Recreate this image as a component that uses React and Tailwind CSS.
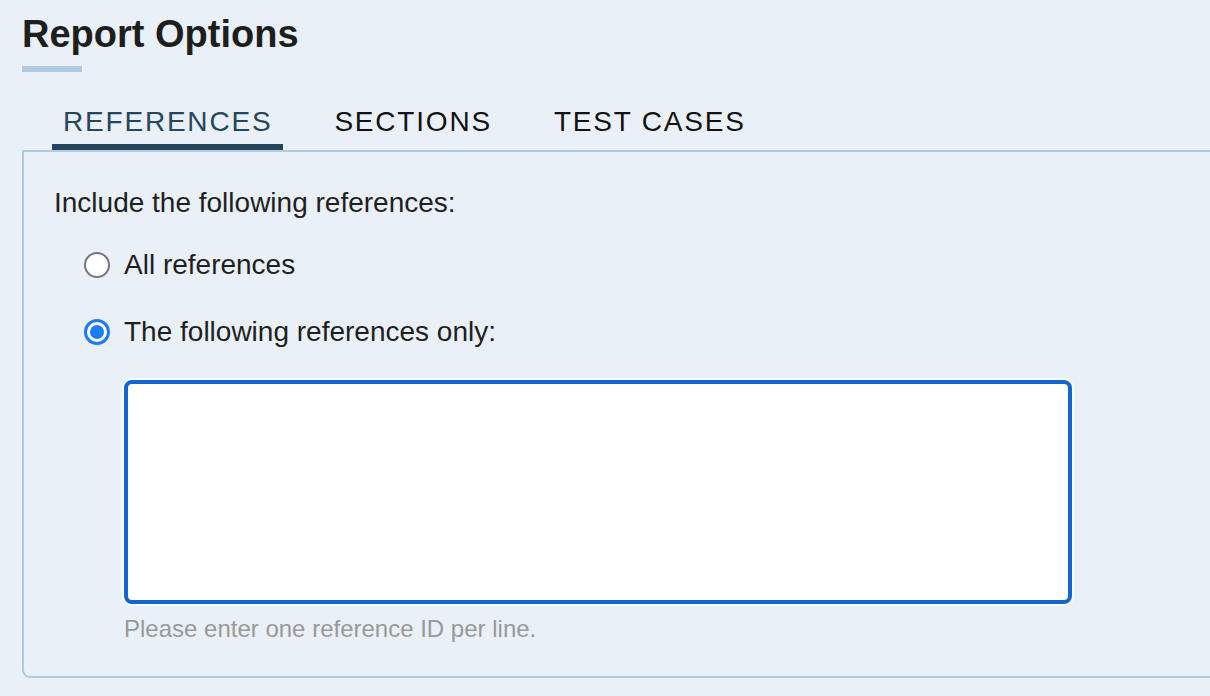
import { useState } from "react";

const tabs = ["REFERENCES", "SECTIONS", "TEST CASES"];

const Radio = ({ checked, label, onClick, className = "" }) => (
  <label className={`flex items-center cursor-pointer ${className}`} onClick={onClick}>
    {checked ? (
      <span className="flex h-[26px] w-[26px] items-center justify-center rounded-full border-[3px] border-[#1b7cf5] bg-white">
        <span className="h-[14px] w-[14px] rounded-full bg-[#1b7cf5]" />
      </span>
    ) : (
      <span className="h-[26px] w-[26px] rounded-full border-2 border-[#777] bg-white" />
    )}
    <span className="ml-[14px] text-[28px] leading-[34px] text-[#1f1f1f]">{label}</span>
  </label>
);

export default function App() {
  const [tab, setTab] = useState(0);
  const [mode, setMode] = useState("only");

  return (
    <div
      className="min-h-screen w-full overflow-hidden bg-[#e9f0f7] pl-[22px] pt-[12px] pb-[16px]"
      style={{ fontFamily: '"Liberation Sans", Arial, sans-serif' }}
    >
      <h1 className="text-[38px] font-bold leading-[44px] text-[#1e1e1e]">Report Options</h1>
      <div className="mt-[10px] h-[6px] w-[60px] bg-[#b0cbe0]" />

      <div className="mt-[33px] ml-[30px] flex gap-[40px]">
        {tabs.map((t, i) => (
          <button
            key={t}
            onClick={() => setTab(i)}
            className={`border-b-[6px] px-[11px] pb-[5px] text-[28px] leading-[34px] tracking-[1.8px] ${
              tab === i ? "border-[#24455c] text-[#26465e]" : "border-transparent text-[#111]"
            }`}
          >
            {t}
          </button>
        ))}
      </div>

      <div className="w-[1220px] rounded-bl-[8px] border-2 border-[#b1cbe0] pt-[34px] pl-[30px] pb-[33px]">
        <p className="text-[28px] leading-[34px] text-[#1f1f1f]">Include the following references:</p>
        <div className="ml-[30px]">
          <Radio
            className="mt-[28px]"
            label="All references"
            checked={mode === "all"}
            onClick={() => setMode("all")}
          />
          <Radio
            className="mt-[33px]"
            label="The following references only:"
            checked={mode === "only"}
            onClick={() => setMode("only")}
          />
          <div className="ml-[40px] mt-[31px]">
            <textarea className="block h-[224px] w-[948px] resize-none rounded-[8px] border-4 border-[#1465d1] bg-white shadow-[0_0_0_2px_#ffffff] outline-none" />
            <p className="mt-[11px] text-[24px] leading-[28px] text-[#999]">
              Please enter one reference ID per line.
            </p>
          </div>
        </div>
      </div>
    </div>
  );
}
